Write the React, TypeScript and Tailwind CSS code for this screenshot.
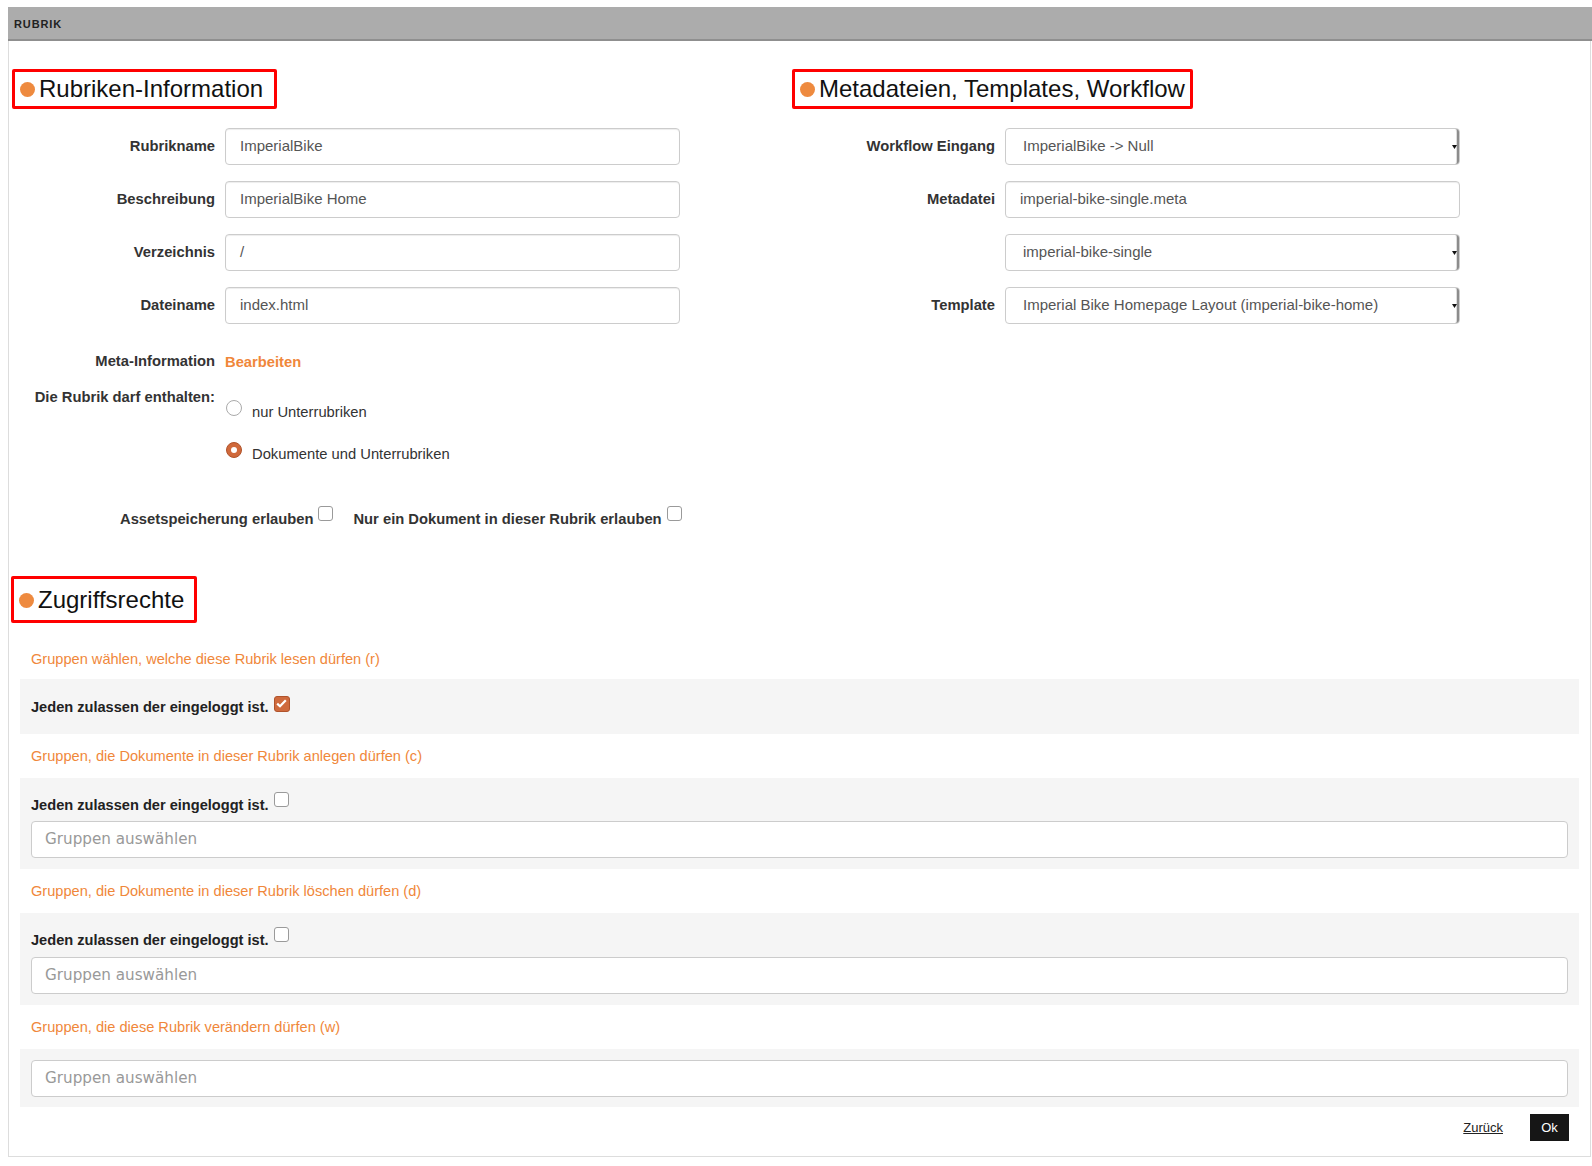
import React from 'react';

const FONT = { fontFamily: '"Liberation Sans", Arial, sans-serif' };

function Heading({ title, tall, pr = 'pr-[8px]' }: { title: string; tall?: boolean; pr?: string }) {
    return (
        <div className={`inline-flex items-center border-[3px] border-[#f00] rounded-[2px] pl-[5px] ${pr} ${tall ? 'h-[47px]' : 'h-[40px]'}`}>
            <span className='w-[15px] h-[15px] rounded-full bg-[#ee8a3f] mr-[4px] mt-[1px]'></span>
            <span className='text-[24px] text-[#111] leading-none'>{title}</span>
        </div>
    );
}

function TextInput({ value, pad = 'pl-[14px]' }: { value: string; pad?: string }) {
    return (
        <div className={`w-[455px] h-[37px] border border-[#ccc] rounded-[4px] shadow-[inset_0_1px_1px_rgba(0,0,0,0.075)] flex items-center ${pad} text-[15px] text-[#555] bg-white`}>
            {value}
        </div>
    );
}

function SelectBox({ value }: { value: string }) {
    return (
        <div className='w-[455px] h-[37px] border border-[#ccc] rounded-[4px] flex items-center bg-white relative'>
            <span className='pl-[17px] text-[15px] text-[#555] flex-1'>{value}</span>
            <span className='h-full w-[8px] flex items-center justify-center border-r-2 border-[#8c8c8c] rounded-r-[3px] shadow-[inset_-1px_0_0_#ddd]'>
                <svg width='5' height='4' viewBox='0 0 5 4'><path d='M0 0h5L2.5 4z' fill='#111' /></svg>
            </span>
        </div>
    );
}

function FormRow({ label, children }: { label: string; children: React.ReactNode }) {
    return (
        <div className='flex mb-[16px]'>
            <div className='w-[203px] text-right font-bold text-[14.75px] text-[#333] pt-[7px]'>{label}</div>
            <div className='ml-[10px]'>{children}</div>
        </div>
    );
}

function Checkbox({ checked }: { checked?: boolean }) {
    if (checked) {
        return (
            <span className='inline-flex w-[16px] h-[16px] rounded-[3px] bg-[#cf6a3d] border border-[#b0532b] items-center justify-center'>
                <svg width='11' height='9' viewBox='0 0 11 9'><path d='M1.2 4.6 4 7.3 9.8 1.2' fill='none' stroke='#fff' strokeWidth='2.2' /></svg>
            </span>
        );
    }
    return <span className='inline-block w-[15px] h-[15px] rounded-[3px] border border-[#9a9a9a] bg-white'></span>;
}

function Radio({ checked }: { checked?: boolean }) {
    if (checked) {
        return (
            <span className='inline-flex w-[16px] h-[16px] rounded-full bg-[#d0693b] border border-[#b0532b] items-center justify-center'>
                <span className='w-[6px] h-[6px] rounded-full bg-white'></span>
            </span>
        );
    }
    return <span className='inline-block w-[16px] h-[16px] rounded-full border border-[#aaa] bg-white'></span>;
}

function GroupInput() {
    return (
        <div className='h-[37px] border border-[#ccc] rounded-[4px] bg-white flex items-center pl-[13px] text-[15.2px] text-[#999]' style={{ fontFamily: '"DejaVu Sans", sans-serif' }}>
            Gruppen auswählen
        </div>
    );
}

function Allow({ checked }: { checked?: boolean }) {
    return (
        <div className='flex items-center font-bold text-[14.6px] text-[#222] h-[20px]'>
            <span>Jeden zulassen der eingeloggt ist.</span>
            <span className='ml-[5px] -mt-[7px]'><Checkbox checked={checked} /></span>
        </div>
    );
}

function OrangeTitle({ text, pb = 'pb-[12px]' }: { text: string; pb?: string }) {
    return <div className={`px-[11px] pt-[12px] ${pb} leading-[20px] text-[14.6px] text-[#f0873a]`}>{text}</div>;
}

export default function App() {
    return (
        <div className='bg-white min-h-screen pt-[7px] pl-[8px]' style={FONT}>
            <div className='h-[34px] bg-[#acacac] border-b-2 border-[#8f8f8f] flex items-center pt-[2px] pl-[6px] text-[11px] font-bold tracking-[0.08em] text-[#222]'>
                RUBRIK
            </div>
            <div className='border-l border-r border-b border-[#ddd] h-[1116px] mr-px flex flex-col'>
                <div className='flex pt-[28px]'>
                    <div className='w-[783px] pl-[3px]'>
                        <Heading title='Rubriken-Information' pr='pr-[11px]' />
                        <div className='mt-[19px]'>
                            <FormRow label='Rubrikname'><TextInput value='ImperialBike' /></FormRow>
                            <FormRow label='Beschreibung'><TextInput value='ImperialBike Home' /></FormRow>
                            <FormRow label='Verzeichnis'><TextInput value='/' /></FormRow>
                            <FormRow label='Dateiname'><TextInput value='index.html' /></FormRow>
                        </div>
                        <div className='flex items-center mt-[27px] h-[20px]'>
                            <div className='w-[203px] text-right font-bold text-[14.75px] text-[#333]'>Meta-Information</div>
                            <div className='ml-[10px] font-bold text-[14.75px] text-[#f0873a] mt-[3px]'>Bearbeiten</div>
                        </div>
                        <div className='flex mt-[16px]'>
                            <div className='w-[203px] text-right font-bold text-[14.75px] text-[#333] leading-[20px]'>Die Rubrik darf enthalten:</div>
                            <div className='ml-[11px] flex flex-col gap-[19px] pt-[13px]'>
                                <div className='flex items-start gap-[10px]'>
                                    <Radio />
                                    <span className='text-[14.75px] text-[#333] mt-[1px]'>nur Unterrubriken</span>
                                </div>
                                <div className='flex items-start gap-[10px]'>
                                    <Radio checked />
                                    <span className='text-[14.75px] text-[#333] mt-[1px]'>Dokumente und Unterrubriken</span>
                                </div>
                            </div>
                        </div>
                        <div className='flex items-center mt-[44px] pl-[108px] font-bold text-[14.75px] text-[#333] h-[20px]'>
                            <span>Assetspeicherung erlauben</span>
                            <span className='ml-[5px] -mt-[7px]'><Checkbox /></span>
                            <span className='ml-[20px]'>Nur ein Dokument in dieser Rubrik erlauben</span>
                            <span className='ml-[5px] -mt-[7px]'><Checkbox /></span>
                        </div>
                    </div>
                    <div className='flex-1'>
                        <Heading title='Metadateien, Templates, Workflow' pr='pr-[5px]' />
                        <div className='mt-[19px]'>
                            <FormRow label='Workflow Eingang'><SelectBox value='ImperialBike -> Null' /></FormRow>
                            <FormRow label='Metadatei'><TextInput value='imperial-bike-single.meta' /></FormRow>
                            <FormRow label=''><SelectBox value='imperial-bike-single' /></FormRow>
                            <FormRow label='Template'><SelectBox value='Imperial Bike Homepage Layout (imperial-bike-home)' /></FormRow>
                        </div>
                    </div>
                </div>

                <div className='pl-[2px] mt-[47px]'>
                    <Heading title='Zugriffsrechte' tall pr='pr-[10px]' />
                </div>

                <div className='mx-[11px] mt-[14px]'>
                    <OrangeTitle text='Gruppen wählen, welche diese Rubrik lesen dürfen (r)' pb='pb-[10px]' />
                    <div className='bg-[#f5f5f5] h-[55px] px-[11px] flex items-center pt-[2px]'>
                        <Allow checked />
                    </div>
                    <OrangeTitle text='Gruppen, die Dokumente in dieser Rubrik anlegen dürfen (c)' />
                    <div className='bg-[#f5f5f5] px-[11px] pt-[18px] pb-[11px]'>
                        <Allow />
                        <div className='mt-[5px]'><GroupInput /></div>
                    </div>
                    <OrangeTitle text='Gruppen, die Dokumente in dieser Rubrik löschen dürfen (d)' />
                    <div className='bg-[#f5f5f5] px-[11px] pt-[18px] pb-[11px]'>
                        <Allow />
                        <div className='mt-[6px]'><GroupInput /></div>
                    </div>
                    <OrangeTitle text='Gruppen, die diese Rubrik verändern dürfen (w)' />
                    <div className='bg-[#f5f5f5] px-[11px] pt-[11px] pb-[10px]'>
                        <GroupInput />
                    </div>
                </div>

                <div className='flex justify-end items-center mt-[7px] pr-[21px]'>
                    <a className='text-[13px] text-[#222] underline mr-[27px]'>Zurück</a>
                    <button className='bg-[#161616] text-white text-[13px] w-[39px] h-[27px]'>Ok</button>
                </div>
            </div>
        </div>
    );
}
